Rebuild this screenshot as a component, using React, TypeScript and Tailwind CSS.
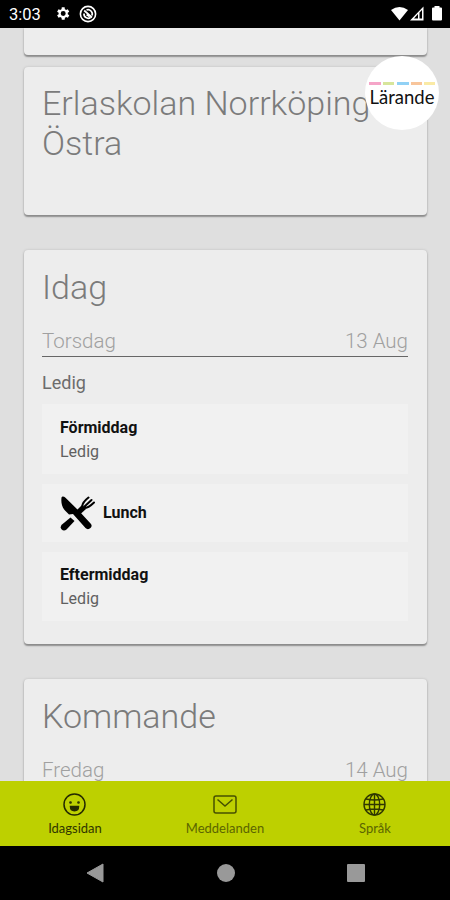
import React, { FC, ReactNode } from "react";

interface CardProps {
	children?: ReactNode;
	className: string;
}

interface DayProps {
	day: string;
	date: string;
}

interface LessonProps {
	title: string;
	status: string;
	className?: string;
}

interface TabProps {
	label: string;
	children: ReactNode;
	className: string;
}

const Card: FC<CardProps> = ({ children, className }) => (
	<section
		className={`mx-[23.5px] shrink-0 rounded bg-[#ededed] px-[18.5px] shadow-[0_1.5px_1.5px_rgba(0,0,0,0.35),0_0_3px_rgba(0,0,0,0.12)] ${className}`}
	>
		{children}
	</section>
);

const Title: FC<{ children: ReactNode }> = ({ children }) => (
	<h2 className="text-[34px] leading-10 font-light text-[#7b7b7b]">
		{children}
	</h2>
);

const Day: FC<DayProps> = ({ day, date }) => (
	<div className="mt-5 flex h-[30px] justify-between border-b-[1.5px] border-[#666] text-[20.5px] leading-[28px] font-light text-[#a0a0a0]">
		<span>{day}</span>
		<span>{date}</span>
	</div>
);

const Lesson: FC<LessonProps> = ({ title, status, className = "" }) => (
	<div className={`bg-[#f1f1f1] px-[18px] ${className}`}>
		<h3 className="text-[16px] leading-6 font-bold text-[#111]">
			{title}
		</h3>
		<p className="text-[16px] leading-[23px] text-[#606060]">{status}</p>
	</div>
);

const Tab: FC<TabProps> = ({ label, children, className }) => (
	<button
		className={`flex w-1/3 flex-col items-center pt-3 font-[Lato,sans-serif] text-[13px] leading-4 ${className}`}
	>
		{children}
		<span className="mt-1">{label}</span>
	</button>
);

const Cutlery = () => (
	<svg className="h-[35px] w-[36px]" viewBox="0 0 36 35">
		{/* Knife */}
		<path
			d="M1.5 1.5C1 6 1.5 11 5 14.5L9 18.5L13 18L25.5 32C28 35 33.500 31.500 31 28L19.500 15.500L5.500 1.800C4 .5 2 0 1.500 1.500Z"
			fill="#000"
		/>
		{/* Fork */}
		<path
			d="M10.500 21.500L2 28.500C-1.500 32 3 36.500 6.500 33.500L14.500 25Z"
			fill="#000"
		/>
		<path
			d="M18 16L22.500 11.500C21.500 8 24 5 28.500 1.500M23 12C27 12.500 30 10.500 34 6.500M24.500 10.500L31.500 4"
			fill="none"
			stroke="#000"
			strokeWidth="2"
			strokeLinecap="round"
		/>
		<path d="M17 14L22 9L26 13L20.500 18Z" fill="#000" />
	</svg>
);

const App = () => {
	return (
		<div className="flex h-[900px] w-[450px] flex-col overflow-hidden bg-[#dfdfdf] font-[Roboto,sans-serif]">
			{/* Status bar */}
			<header className="flex h-[27.5px] shrink-0 items-center bg-black pl-[9px] text-white">
				<span className="pt-0.5 text-[16.5px] leading-5">3:03</span>
				<svg
					className="ml-[13px] h-[17px] w-[17px]"
					viewBox="0 0 24 24"
					fill="white"
				>
					<path
						fillRule="evenodd"
						d="M19.400 13c.1-.7.1-1.300 0-2l2.100-1.600-2-3.500-2.500 1a8 8 0 0 0-1.700-1L15 3.300h-4l-.4 2.600a8 8 0 0 0-1.700 1l-2.500-1-2 3.500L6.600 11c-.1.700-.1 1.300 0 2l-2.200 1.600 2 3.500 2.500-1q.8.600 1.700 1l.4 2.600h4l.4-2.600q.9-.4 1.700-1l2.500 1 2-3.500ZM13 15.500a3.500 3.500 0 1 1 0-7 3.500 3.500 0 0 1 0 7Z"
					/>
				</svg>
				<svg
					className="ml-2 h-[18px] w-[18px]"
					viewBox="0 0 18 18"
					fill="none"
					stroke="white"
				>
					<circle cx="9" cy="9" r="7.600" strokeWidth="1.600" />
					<path
						d="M5.200 5.500L13 12.500M5 8.500a4.200 4.200 0 0 0 6.500 4M7.500 5a4.300 4.300 0 0 1 5.500 5.500M7.500 9.500l3 2"
						strokeWidth="1.700"
					/>
				</svg>
				<svg
					className="mr-[7px] ml-auto h-[18px] w-[53px]"
					viewBox="0 0 53 18"
				>
					<path d="M1 5Q9.500-1 18 5L9.500 15.500Z" fill="white" />
					<path
						fillRule="evenodd"
						d="M33.500 1.500V15.500H20ZM28 9L24 13.500H28ZM29.500 7.500V13.500H32V5Z"
						fill="white"
					/>
					<path
						d="M42 3.500q0-1 1-1h1.500V1h5v1.500H51q1 0 1 1v11q0 1-1 1h-8q-1 0-1-1Z"
						fill="white"
					/>
				</svg>
			</header>

			<main className="relative flex min-h-0 flex-1 flex-col overflow-hidden">
				<Card className="h-[27px] rounded-t-none" />
				<Card className="mt-[12.5px] h-[147.5px] pt-4">
					<Title>
						Erlaskolan Norrköping
						<br />
						Östra
					</Title>
				</Card>

				{/* Today */}
				<Card className="mt-[35.500px] h-[394px] pt-[17px]">
					<Title>Idag</Title>
					<Day day="Torsdag" date="13 Aug" />
					<p className="mt-3 text-[18px] leading-7 text-[#6c6c6c]">
						Ledig
					</p>
					<Lesson
						title="Förmiddag"
						status="Ledig"
						className="mt-[7px] h-[70px] pt-3"
					/>
					<div className="mt-[10px] flex h-[58px] items-center bg-[#f1f1f1] px-[18px]">
						<Cutlery />
						<h3 className="ml-[7px] text-[16px] leading-6 font-bold text-[#111]">
							Lunch
						</h3>
					</div>
					<Lesson
						title="Eftermiddag"
						status="Ledig"
						className="mt-[10px] h-[69px] pt-[11px]"
					/>
				</Card>

				{/* Upcoming */}
				<Card className="mt-[35px] h-[200px] pt-[17px]">
					<Title>Kommande</Title>
					<Day day="Fredag" date="14 Aug" />
				</Card>

				{/* Floating badge */}
				<div className="absolute top-[28px] left-[365px] flex h-[74px] w-[74px] flex-col items-center rounded-full bg-white pt-[26px]">
					<div className="flex w-[66px] justify-between">
						<i className="h-[3px] w-[12px] bg-[#f5a5c8]" />
						<i className="h-[3px] w-[11px] bg-[#d7e59b]" />
						<i className="h-[3px] w-[12px] bg-[#91d1f5]" />
						<i className="h-[3px] w-[11px] bg-[#f8c59b]" />
						<i className="h-[3px] w-[11px] bg-[#faeaa5]" />
					</div>
					<span className="mt-px font-[Lato,sans-serif] text-[18.500px] leading-[22px] text-[#111]">
						Lärande
					</span>
				</div>
			</main>

			<nav className="flex h-[65px] shrink-0 bg-[#bdd000]">
				<Tab label="Idagsidan" className="text-[#303500]">
					<svg
						className="h-[23px] w-[23px]"
						viewBox="0 0 23 23"
						fill="none"
						stroke="#252a00"
						strokeWidth="1.500"
					>
						<circle cx="11.500" cy="11.500" r="10.500" />
						<circle cx="7.500" cy="9.500" r=".6" />
						<circle cx="15.500" cy="9.500" r=".6" />
						<path
							d="M7.500 13.500h8c0 5.500-8 5.500-8 0Z"
							fill="#252a00"
						/>
					</svg>
				</Tab>
				<Tab label="Meddelanden" className="text-[#5b6500]">
					<svg
						className="h-[23px] w-[24px]"
						viewBox="0 0 24 23"
						fill="none"
						stroke="#465000"
						strokeWidth="1.500"
					>
						<rect x="1" y="3" width="22" height="17" rx="2" />
						<path d="M4.500 6.500L12 13L19.500 6.500" />
					</svg>
				</Tab>
				<Tab label="Språk" className="text-[#5b6500]">
					<svg
						className="h-[23px] w-[23px]"
						viewBox="0 0 23 23"
						fill="none"
						stroke="#303700"
						strokeWidth="1.400"
					>
						<circle cx="11.500" cy="11.500" r="10.500" />
						<ellipse cx="11.500" cy="11.500" rx="5.200" ry="10.500" />
						<path d="M11.500 1v21M1 11.500h21M3 6q8.500 2 17 0M3 17q8.500-2 17 0" />
					</svg>
				</Tab>
			</nav>

			{/* System navigation */}
			<footer className="flex h-[54px] shrink-0 items-center justify-between bg-black pr-[85px] pl-[86px]">
				<svg className="h-[20px] w-[18px]" viewBox="0 0 18 20">
					<path d="M17 1v18L1 10Z" fill="#999" stroke="#999" />
				</svg>
				<div className="h-[18px] w-[18px] rounded-full bg-[#999]" />
				<div className="h-[18px] w-[18px] rounded-[1px] bg-[#999]" />
			</footer>
		</div>
	);
};

export default App;
